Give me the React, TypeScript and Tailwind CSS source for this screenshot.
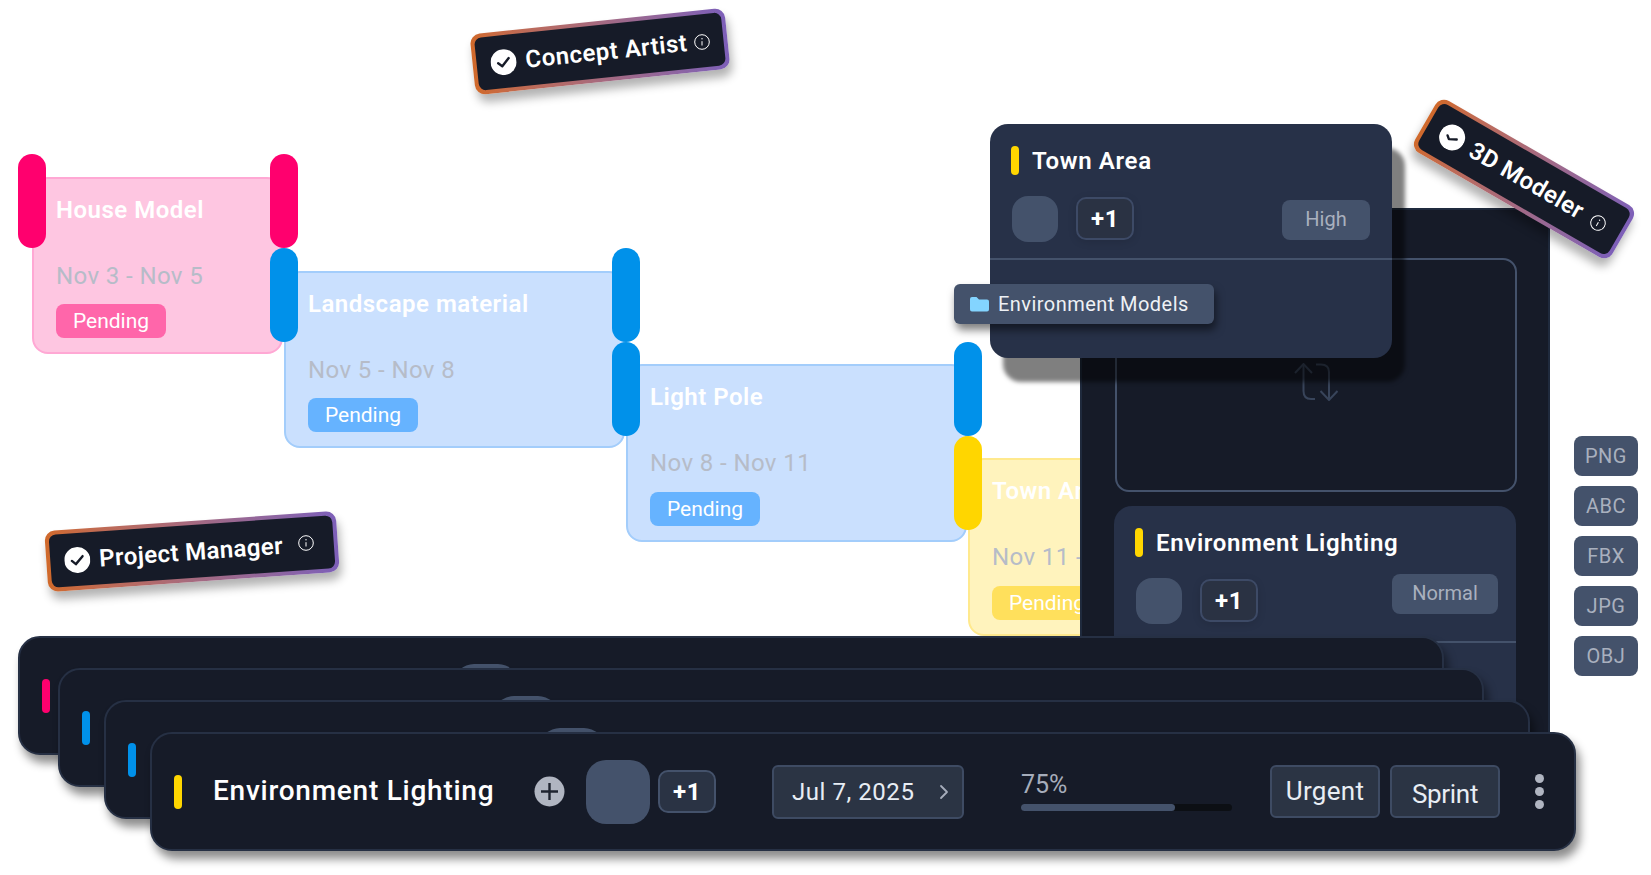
import { ChevronRight } from "lucide-react";

function Handle({ className }: { className: string }) {
  return <div className={`absolute w-[28px] h-[94px] rounded-[14px] ${className}`} />;
}

function GanttCard({
  className, title, dates, badge,
}: { className: string; title: string; dates: string; badge: string }) {
  return (
    <div className={`absolute rounded-[16px] border-2 pl-[22px] pt-[17px] flex flex-col items-start ${className}`}>
      <div className="h-[28px] leading-[28px] text-[24px] font-semibold text-white whitespace-nowrap tracking-[0.5px]">{title}</div>
      <div className="mt-[38px] h-[28px] leading-[28px] text-[24px] whitespace-nowrap text-[#b6bcc8] tracking-[0.4px]">{dates}</div>
      <div className={`w-[110px] h-[34px] rounded-[8px] flex items-center justify-center pt-[1px] text-[21px] text-white ${badge}`}>Pending</div>
    </div>
  );
}

function CheckDot({ small }: { small?: boolean }) {
  return (
    <svg width="26" height="26" viewBox="0 0 26 26" className="shrink-0">
      <circle cx="13" cy="13" r="13" fill="#ffffff" />
      <path d={small ? "M8 13.5 L11 16 L18 12.5" : "M7.5 13.5 L11.3 17 L18.5 9.5"} fill="none" stroke="#161b28" strokeWidth="2.4" strokeLinecap="round" strokeLinejoin="round" />
    </svg>
  );
}

function InfoDot() {
  return (
    <svg width="16" height="16" viewBox="0 0 16 16" className="shrink-0">
      <circle cx="8" cy="8" r="7.3" fill="none" stroke="#ffffff" strokeWidth="1" />
      <path d="M8 7.2 V11.5" stroke="#ffffff" strokeWidth="1" />
      <circle cx="8" cy="4.8" r="0.7" fill="#ffffff" />
    </svg>
  );
}

function RoleTag({ className, label, textClass, small }: { className: string; label: string; textClass: string; small?: boolean }) {
  return (
    <div className={`absolute p-[4px] rounded-[10px] bg-gradient-to-r from-[#d0692a] to-[#7d5fb8] shadow-[2px_8px_10px_rgba(0,0,0,0.3)] ${className}`}>
      <div className="w-full h-full rounded-[7px] bg-[#161b28] flex items-center pl-[14px]">
        <CheckDot small={small} />
        <span className={`text-[24px] font-semibold text-white whitespace-nowrap ${textClass}`}>{label}</span>
      </div>
    </div>
  );
}

function TaskCard({
  className, title, prio, prioClass, dividerClass,
}: { className: string; title: string; prio: string; prioClass: string; dividerClass: string }) {
  return (
    <div className={`absolute rounded-[18px] bg-[#273148] ${className}`}>
      <div className="pl-[21px] pt-[22px] flex items-center h-[51px]">
        <div className="w-[8px] h-[29px] rounded-full bg-[#ffd600]" />
        <div className="ml-[13px] text-[24px] font-semibold text-white whitespace-nowrap tracking-[0.65px]">{title}</div>
      </div>
      <div className="relative mt-[21px] pl-[22px] flex items-start">
        <div className="w-[46px] h-[46px] rounded-[16px] bg-[#44526b]" />
        <div className="ml-[18px] mt-[1px] w-[58px] h-[43px] rounded-[10px] border-2 border-[#3d4a66] bg-[#2a3243] shadow-[0_2px_8px_rgba(0,0,0,0.12)] flex items-center justify-center text-[24px] font-bold text-white tracking-[0.5px]">+1</div>
        <div className={`h-[40px] rounded-[8px] bg-[#44526b] flex items-center justify-center pb-[2px] text-[20px] text-[#a9b0be] ${prioClass}`}>{prio}</div>
      </div>
      <div className={`h-[2px] bg-[#44526b] ${dividerClass}`} />
    </div>
  );
}

function TaskBar({ className, barClass }: { className: string; barClass: string }) {
  return (
    <div className={`absolute w-[1426px] h-[119px] rounded-[22px] border-2 border-[#263044] bg-[#161b28] shadow-[4px_8px_10px_rgba(0,0,0,0.45)] flex items-center pl-[22px] ${className}`}>
      <div className={`w-[8px] h-[34px] rounded-full shrink-0 ${barClass}`} />
      <div className="ml-[31px] mb-[2px] w-[282px] shrink-0 text-[28px] font-medium text-white whitespace-nowrap tracking-[0.75px]">Environment Lighting</div>
      <svg width="31" height="31" viewBox="0 0 31 31" className="ml-[39px] shrink-0">
        <circle cx="15.5" cy="15.5" r="15" fill="#b0b5c1" />
        <path d="M15.5 7 V24 M7 15.5 H24" stroke="#1f2430" strokeWidth="2.4" />
      </svg>
      <div className="ml-[21px] w-[64px] h-[64px] rounded-[20px] bg-[#44526b] shrink-0" />
      <div className="ml-[8px] w-[58px] h-[43px] rounded-[10px] border-2 border-[#44526b] bg-[#2a3344] flex items-center justify-center text-[24px] font-bold text-white tracking-[0.5px] shrink-0">+1</div>
      <div className="ml-[56px] w-[192px] h-[54px] rounded-[6px] border-2 border-[#3e4b63] bg-[#2b3444] flex items-center pl-[18px] shrink-0">
        <span className="w-[140px] text-[24px] text-[#e8edf4] whitespace-nowrap tracking-[0.55px]">Jul 7, 2025</span>
        <ChevronRight size={24} color="#a6adbb" strokeWidth={1.8} />
      </div>
      <div className="ml-[57px] mt-[2px] w-[211px] shrink-0 flex flex-col">
        <div className="h-[22px] leading-[22px] text-[25px] text-[#a6adbb]">75%</div>
        <div className="mt-[8px] h-[7px] rounded-full bg-[#0c0f14]">
          <div className="h-full w-[154px] rounded-full bg-[#44526b]" />
        </div>
      </div>
      <div className="ml-[38px] w-[110px] h-[53px] rounded-[6px] border-2 border-[#3e4b63] bg-[#2b3444] flex items-center justify-center text-[26px] text-[#e8edf4] tracking-[0.3px] shrink-0">Urgent</div>
      <div className="ml-[10px] w-[110px] h-[53px] rounded-[6px] border-2 border-[#3e4b63] bg-[#2b3444] flex items-center justify-center pt-[5px] text-[26px] text-[#e8edf4] tracking-[-0.3px] shrink-0">Sprint</div>
      <div className="ml-[35px] flex flex-col gap-[4px] shrink-0">
        <div className="w-[9px] h-[9px] rounded-full bg-[#b0b5c1]" />
        <div className="w-[9px] h-[9px] rounded-full bg-[#b0b5c1]" />
        <div className="w-[9px] h-[9px] rounded-full bg-[#b0b5c1]" />
      </div>
    </div>
  );
}

const formats = ["PNG", "ABC", "FBX", "JPG", "OBJ"];

export default function App() {
  return (
    <div className="relative w-[1651px] h-[875px] overflow-hidden bg-white [font-family:Roboto,sans-serif]">
      <GanttCard className="left-[32px] top-[177px] w-[251px] h-[177px] bg-[#fec6e1] border-[#ffa8d4]" title="House Model" dates="Nov 3 - Nov 5" badge="mt-[14px] bg-[#ff66aa]" />
      <Handle className="left-[18px] top-[154px] bg-[#ff006e]" />
      <Handle className="left-[270px] top-[154px] bg-[#ff006e]" />

      <GanttCard className="left-[284px] top-[271px] w-[341px] h-[177px] bg-[#cae0fe] border-[#a3cdfb]" title="Landscape material" dates="Nov 5 - Nov 8" badge="mt-[14px] bg-[#66b3ff]" />
      <Handle className="left-[270px] top-[248px] bg-[#0091ea]" />
      <Handle className="left-[612px] top-[248px] bg-[#0091ea]" />

      <GanttCard className="left-[626px] top-[364px] w-[341px] h-[178px] bg-[#cae0fe] border-[#a3cdfb]" title="Light Pole" dates="Nov 8 - Nov 11" badge="mt-[15px] bg-[#66b3ff]" />
      <Handle className="left-[612px] top-[342px] bg-[#0091ea]" />
      <Handle className="left-[954px] top-[342px] bg-[#0091ea]" />

      <GanttCard className="left-[968px] top-[458px] w-[341px] h-[178px] bg-[#fff3bd] border-[#ffe98d]" title="Town Area" dates="Nov 11 - Nov 14" badge="mt-[15px] bg-[#ffe05c]" />
      <Handle className="left-[954px] top-[436px] bg-[#ffd600]" />

      {/* Large dark panel */}
      <div className="absolute left-[1080px] top-[208px] w-[470px] h-[600px] bg-[#161b28] border-x-2 border-t-2 border-[#1f2a3d]">
        <div className="absolute left-[33px] top-[48px] w-[402px] h-[234px] rounded-[14px] border-2 border-[#44526b] flex items-start justify-center pt-[103px]">
          <svg width="44" height="38" viewBox="0 0 44 38" fill="none" stroke="#38445a" strokeWidth="2">
            <path d="M1 10 L9.5 1 L18 10" />
            <path d="M9.5 1 V28 Q9.5 36 17 36 H21" />
            <path d="M22 1.5 H27 Q35 1.5 35 9 V37" />
            <path d="M26.5 28 L35 37 L43.5 28" />
          </svg>
        </div>
      </div>

      <TaskCard className="left-[1114px] top-[506px] w-[402px] h-[300px]" title="Environment Lighting" prio="Normal" prioClass="absolute right-[18px] top-[-4px] w-[106px]" dividerClass="mt-[17px]" />

      <TaskCard className="left-[990px] top-[124px] w-[402px] h-[234px] shadow-[13px_24px_4px_rgba(0,0,0,0.5)]" title="Town Area" prio="High" prioClass="absolute right-[22px] top-[4px] w-[88px]" dividerClass="mt-[16px]" />

      {/* Folder chip */}
      <div className="absolute left-[954px] top-[284px] w-[260px] h-[40px] rounded-[6px] bg-[#44526b] shadow-[2px_6px_8px_rgba(0,0,0,0.5)] flex items-center pl-[16px] pb-[1px] gap-[9px]">
        <svg width="19" height="16" viewBox="0 0 19 16">
          <path d="M0 3 Q0 1 2 1 H6.5 L9 3.5 H17 Q19 3.5 19 5.5 V13.5 Q19 15.5 17 15.5 H2 Q0 15.5 0 13.5 Z" fill="#83d4ff" />
        </svg>
        <span className="text-[20px] text-[#eef1f5] whitespace-nowrap tracking-[0.45px]">Environment Models</span>
      </div>

      {/* File format chips */}
      <div className="absolute left-[1574px] top-[436px] flex flex-col gap-[10px]">
        {formats.map((f) => (
          <div key={f} className="w-[64px] h-[40px] rounded-[8px] bg-[#44526b] flex items-center justify-center text-[20px] text-[#a9b0be] tracking-[0.5px]">{f}</div>
        ))}
      </div>

      <TaskBar className="left-[18px] top-[636px]" barClass="bg-[#ff006e]" />
      <TaskBar className="left-[58px] top-[668px]" barClass="bg-[#0091ea]" />
      <TaskBar className="left-[104px] top-[700px]" barClass="bg-[#0091ea]" />
      <TaskBar className="left-[150px] top-[732px]" barClass="bg-[#ffd600]" />

      <RoleTag className="left-[472px] top-[21px] w-[256px] h-[61px] rotate-[-6deg]" label="Concept Artist" textClass="ml-[9px] w-[161px] tracking-[0.5px]" />
      <div className="absolute left-[694px] top-[34px]"><InfoDot /></div>

      <RoleTag className="left-[46px] top-[521px] w-[292px] h-[61px] rotate-[-4deg]" label="Project Manager" textClass="ml-[9px] w-[183px] tracking-[0.4px]" />
      <div className="absolute left-[298px] top-[535px]"><InfoDot /></div>

      <RoleTag small className="left-[1410px] top-[149px] w-[228px] h-[60px] rotate-[30deg]" label="3D Modeler" textClass="ml-[9px] tracking-[0.4px]" />
      <div className="absolute left-[1590px] top-[215px] rotate-[30deg]"><InfoDot /></div>
    </div>
  );
}
